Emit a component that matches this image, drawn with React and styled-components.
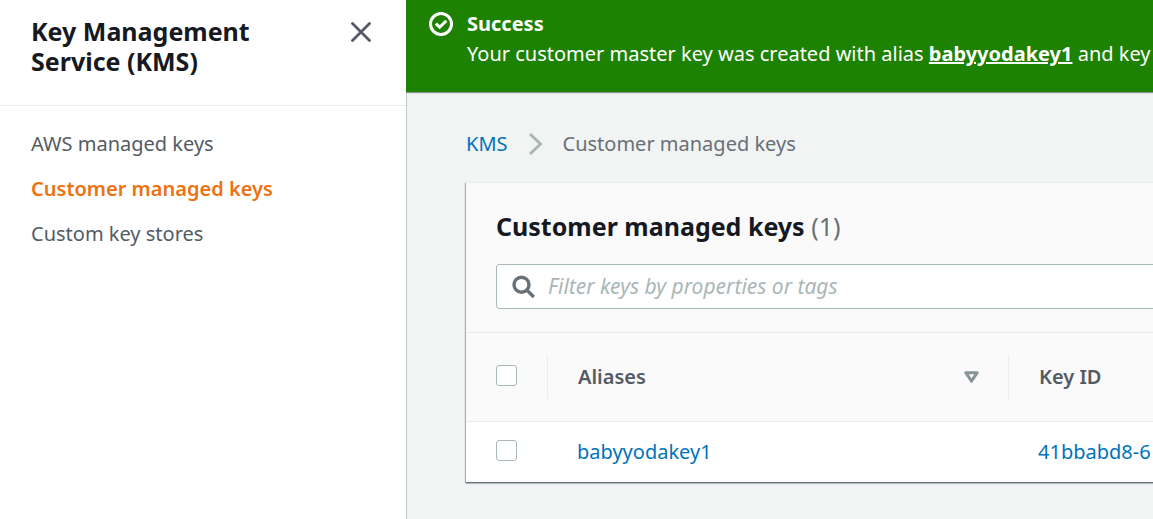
import React from "react";
import styled, { createGlobalStyle } from "styled-components";

const GlobalStyle = createGlobalStyle`
  *, *::before, *::after { box-sizing: border-box; }
  body {
    margin: 0;
    background: #f2f3f3;
    color: #16191f;
    font: 20px/30px "Noto Sans", "Open Sans", sans-serif;
  }
`;

const Page = styled.div`
  display: flex;
  min-height: 100vh;
`;

const Sidebar = styled.aside`
  flex: 0 0 406px;
  background: #fff;
`;

const SidebarHeader = styled.header`
  display: flex;
  justify-content: space-between;
  align-items: flex-start;
  padding: 16px 30px 29px 31px;
  border-bottom: 1px solid #eaeded;
`;

const SidebarTitle = styled.h2`
  margin: 0;
  max-width: 240px;
  font-size: 25px;
  line-height: 30px;
  font-weight: 700;
`;

const CloseButton = styled.button`
  display: grid;
  place-items: center;
  width: 30px;
  height: 32px;
  padding: 0;
  border: 0;
  background: none;
  color: #545b64;
  cursor: pointer;
`;

const NavList = styled.ul`
  display: flex;
  flex-direction: column;
  gap: 15px;
  margin: 0;
  padding: 23px 31px;
  list-style: none;
`;

const NavLink = styled.a`
  display: block;
  color: ${(p) => (p.$active ? "#ec7211" : "#545b64")};
  font-weight: ${(p) => (p.$active ? 600 : 400)};
  text-decoration: none;
`;

const Main = styled.main`
  display: flex;
  flex-direction: column;
  flex: 1;
  min-width: 0;
  overflow: hidden;
`;

const Flash = styled.section`
  position: relative;
  display: flex;
  gap: 14px;
  padding: 9px 23px 23px;
  background: #1d8102;
  color: #fff;
  white-space: nowrap;
  box-shadow: 0 1px 1px #879596;
`;

const FlashIcon = styled.svg`
  flex: none;
  margin-top: 3px;
`;

const FlashTitle = styled.div`
  font-weight: 700;
`;

const FlashLink = styled.a`
  color: inherit;
  font-weight: 700;
  text-decoration: underline;
`;

const Content = styled.div`
  flex: 1;
  padding: 37px 0 36px 59px;
  border-left: 1px solid #c3c9cc;
`;

const Breadcrumbs = styled.nav`
  display: flex;
  align-items: center;
  gap: 20px;
  margin-bottom: 23px;
  color: #687078;
`;

const TextLink = styled.a`
  color: #0073bb;
  text-decoration: none;
`;

const Panel = styled.section`
  min-width: 960px;
  background: #fff;
  border-top: 1px solid #eaeded;
  box-shadow: 0 1px 1px #657478, 0 2px 1px #c3c9cc, -1px 1px 1px #aab7b8;
`;

const PanelHeader = styled.div`
  padding: 28px 30px 23px;
  background: #fafafa;
  border-bottom: 1px solid #eaeded;
`;

const PanelTitle = styled.h1`
  margin: 0 0 23px;
  font-size: 25px;
  line-height: 30px;
  font-weight: 700;
`;

const Count = styled.span`
  color: #687078;
  font-weight: 400;
`;

const Search = styled.label`
  display: flex;
  align-items: center;
  gap: 12px;
  height: 45px;
  padding: 0 15px;
  border: 1px solid #aab7b8;
  border-radius: 3px;
  background: #fff;
  color: #687078;
`;

const SearchInput = styled.input`
  flex: 1;
  min-width: 0;
  padding: 0;
  border: 0;
  outline: 0;
  background: none;
  color: #16191f;
  font: inherit;
  &::placeholder {
    color: #aab7b8;
    font-size: 21px;
    font-style: italic;
    opacity: 1;
  }
`;

const Table = styled.table`
  width: 100%;
  table-layout: fixed;
  border-collapse: separate;
  border-spacing: 0;
  text-align: left;
`;

const Column = styled.col`
  width: ${(p) => p.$width};
`;

const HeadRow = styled.tr`
  height: 89px;
  background: #fafafa;
  & > th { border-bottom: 1px solid #eaeded; }
`;

const HeadCell = styled.th`
  padding: 0;
  color: #545b64;
  font-weight: 600;
`;

const HeadContent = styled.div`
  display: flex;
  align-items: center;
  justify-content: space-between;
  height: 44px;
  padding: 0 29px 0 30px;
  border-left: 1px solid #eaeded;
`;

const BodyRow = styled.tr`
  height: 60px;
`;

const Cell = styled.td`
  padding: 0 30px;
`;

const CheckCell = styled.td`
  padding: 0 30px 4px;
`;

const Checkbox = styled.input.attrs({ type: "checkbox" })`
  appearance: none;
  display: block;
  width: 21px;
  height: 21px;
  margin: 0;
  border: 1px solid #aab7b8;
  border-radius: 3px;
  background: #fff;
  &:checked { background: #0073bb; }
`;

function SortIcon() {
  return (
    <svg width="15" height="12" viewBox="0 0 15 12" fill="none" stroke="#879596" strokeWidth="3" strokeLinejoin="round" aria-hidden="true">
      <path d="M1.8 1.7H13.2L7.5 10.2Z" />
    </svg>
  );
}

export default function App() {
  return (
    <>
      <GlobalStyle />
      <Page>
        <Sidebar>
          <SidebarHeader>
            <SidebarTitle>Key Management Service (KMS)</SidebarTitle>
            <CloseButton aria-label="Close navigation">
              <svg width="20" height="20" viewBox="0 0 20 20" fill="none" stroke="currentColor" strokeWidth="2.8" strokeLinecap="round" aria-hidden="true">
                <path d="M1.5 1.5L18.5 18.5M18.5 1.5L1.5 18.5" />
              </svg>
            </CloseButton>
          </SidebarHeader>
          <nav aria-label="Service">
            <NavList>
              <li><NavLink href="#aws">AWS managed keys</NavLink></li>
              <li><NavLink href="#customer" $active aria-current="page">Customer managed keys</NavLink></li>
              <li><NavLink href="#stores">Custom key stores</NavLink></li>
            </NavList>
          </nav>
        </Sidebar>
        <Main>
          <Flash role="status">
            <FlashIcon width="24" height="24" viewBox="0 0 24 24" fill="none" stroke="currentColor" strokeWidth="3" aria-hidden="true">
              <circle cx="12" cy="12" r="10.5" />
              <path d="M6.8 11.6L10.7 15.2L17.3 8.7" />
            </FlashIcon>
            <div>
              <FlashTitle>Success</FlashTitle>
              <div>
                Your customer master key was created with alias <FlashLink href="#key">babyyodakey1</FlashLink> and key
              </div>
            </div>
          </Flash>
          <Content>
            <Breadcrumbs aria-label="Breadcrumb">
              <TextLink href="#kms">KMS</TextLink>
              <svg width="15" height="24" viewBox="0 0 15 24" fill="none" stroke="#aab7b8" strokeWidth="3" aria-hidden="true">
                <path d="M2 2L12.5 12L2 22" />
              </svg>
              <span>Customer managed keys</span>
            </Breadcrumbs>
            <Panel>
              <PanelHeader>
                <PanelTitle>Customer managed keys <Count>(1)</Count></PanelTitle>
                <Search>
                  <svg width="24" height="24" viewBox="0 0 24 24" fill="none" stroke="currentColor" strokeWidth="3.4" aria-hidden="true">
                    <circle cx="9.5" cy="9.7" r="7.5" />
                    <path d="M14.8 15L21.8 22" />
                  </svg>
                  <SearchInput type="text" placeholder="Filter keys by properties or tags" aria-label="Filter keys" />
                </Search>
              </PanelHeader>
              <Table>
                <colgroup>
                  <Column $width="81px" />
                  <Column $width="461px" />
                  <Column />
                </colgroup>
                <thead>
                  <HeadRow>
                    <CheckCell as="th"><Checkbox aria-label="Select all keys" /></CheckCell>
                    <HeadCell><HeadContent>Aliases<SortIcon /></HeadContent></HeadCell>
                    <HeadCell><HeadContent>Key ID</HeadContent></HeadCell>
                  </HeadRow>
                </thead>
                <tbody>
                  <BodyRow>
                    <CheckCell><Checkbox aria-label="Select babyyodakey1" /></CheckCell>
                    <Cell><TextLink href="#key">babyyodakey1</TextLink></Cell>
                    <Cell><TextLink href="#key">41bbabd8-6</TextLink></Cell>
                  </BodyRow>
                </tbody>
              </Table>
            </Panel>
          </Content>
        </Main>
      </Page>
    </>
  );
}
